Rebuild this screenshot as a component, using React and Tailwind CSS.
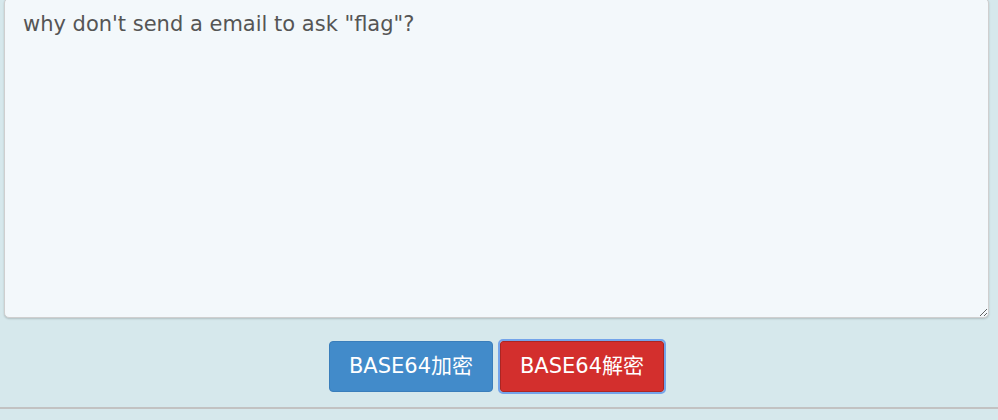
export default function App() {
  return (
    <div className="w-[998px] h-[420px] bg-[#d6e8ec] overflow-hidden flex flex-col font-['DejaVu_Sans','Noto_Sans_CJK_SC',sans-serif]">
      <textarea
        defaultValue={'why don\'t send a email to ask "flag"?'}
        className="block ml-[4px] -mt-[2px] w-[985px] h-[320px] shrink-0 bg-[#f3f8fb] border border-[#cfcfcf] rounded-[5px] shadow-[0_1px_2px_rgba(0,0,0,0.18)] pl-[18px] pr-3 pt-[11px] text-[21px] leading-[28px] text-[#555555] outline-none font-['DejaVu_Sans','Noto_Sans_CJK_SC',sans-serif]"
      />
      <div className="flex justify-center gap-[7px] mt-[23px] pr-[5px]">
        <button className="w-[164px] h-[51px] rounded-[4px] bg-[#428bca] border border-[#3a7ebb] text-white text-[21px] flex items-center justify-center font-['DejaVu_Sans','Noto_Sans_CJK_SC',sans-serif]">
          BASE64加密
        </button>
        <button className="w-[164px] h-[51px] rounded-[3px] bg-[#d32f2d] border border-[#ad2522] text-white text-[21px] flex items-center justify-center outline-2 outline-[#74a4ea] font-['DejaVu_Sans','Noto_Sans_CJK_SC',sans-serif]">
          BASE64解密
        </button>
      </div>
      <div className="mt-[15px] h-[2px] bg-[#c2c2c2] w-full" />
    </div>
  );
}
